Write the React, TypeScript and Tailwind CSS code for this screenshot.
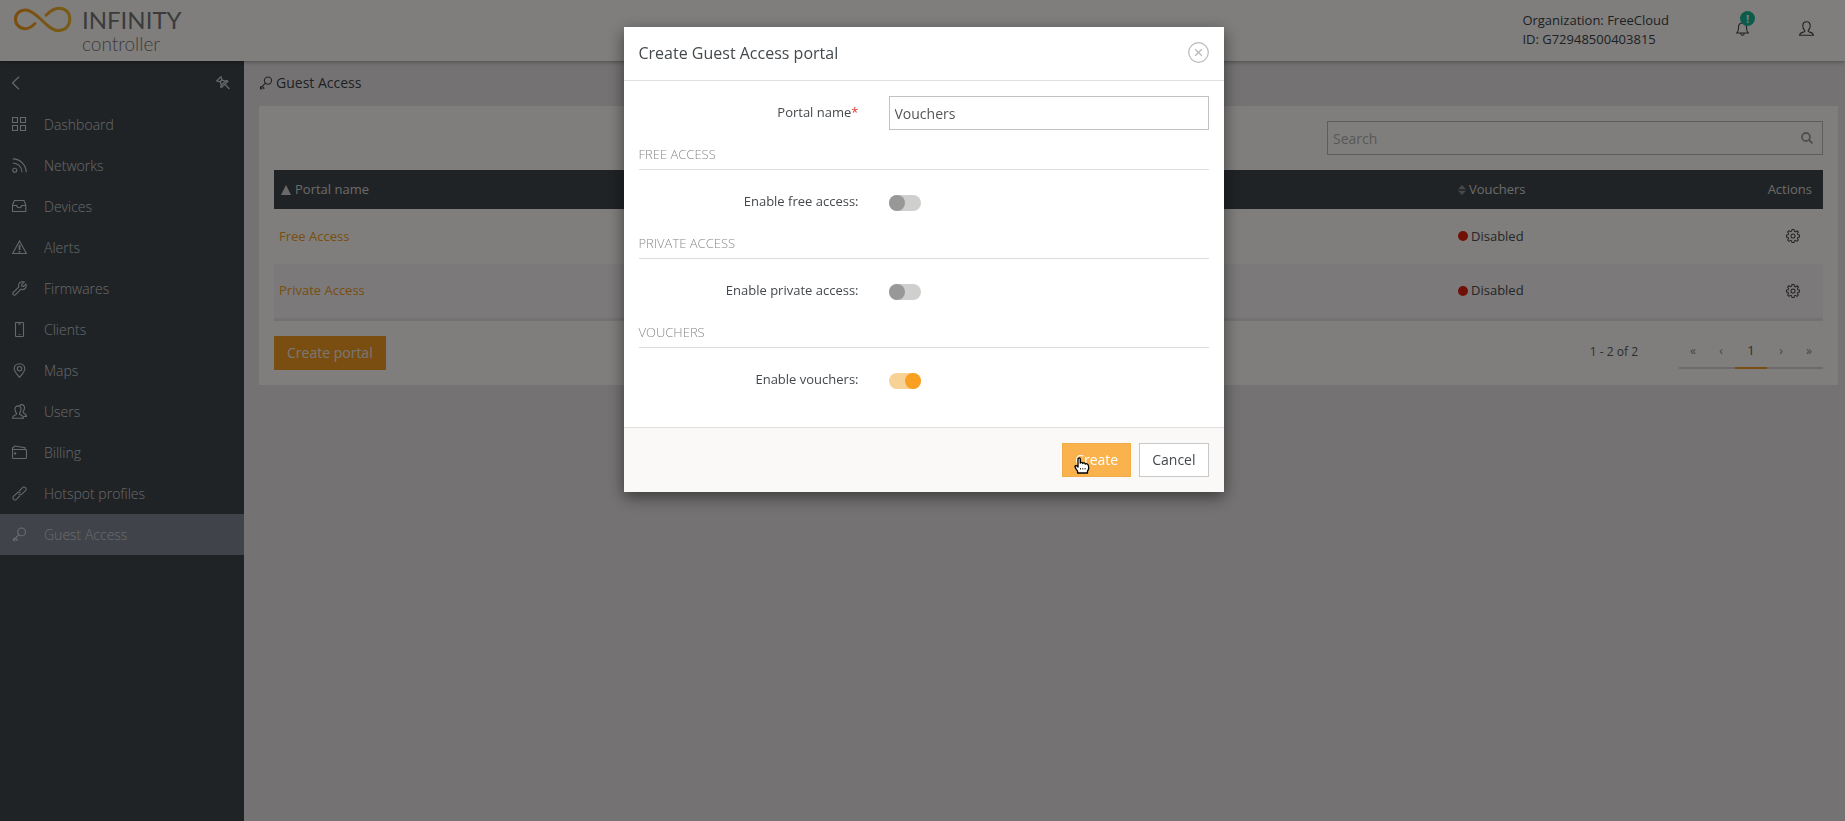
import { useState, type ReactNode } from "react";

type IconProps = { className?: string; children: ReactNode; box?: string };

function Icon({ className = "size-[15px]", children, box = "0 0 15 15" }: IconProps) {
  return (
    <svg
      className={className}
      viewBox={box}
      fill="none"
      stroke="currentColor"
      strokeWidth="1.1"
      aria-hidden="true"
    >
      {children}
    </svg>
  );
}

const KeyShape = (
  <>
    <circle cx="9.6" cy="4.9" r="3.9" />
    <path d="M6.9 7.7 L1.6 13 M1.6 11 V13.6 L3.6 13.8 M3.4 11 L5.4 13 L4.6 13.8" />
  </>
);

const UserShape = (
  <path d="M7.5 .8 C5 .8 3.7 2.4 3.8 5 C3.9 7 4.6 8.5 5.7 9.4 V10.6 C4.4 11.4 .8 11.200 .6 14.200 H14.400 C14.200 11.200 10.600 11.400 9.300 10.600 V9.400 C10.400 8.500 11.100 7 11.200 5 C11.300 2.400 10 .8 7.500 .8 Z" />
);

const navItems: { label: string; icon: ReactNode }[] = [
  {
    label: "Dashboard",
    icon: <path d="M.5 .5 H5.5 V5.5 H.5 Z M8.500 .5 H13.500 V5.500 H8.500 Z M.5 8.500 H5.500 V13.500 H.5 Z M8.500 8.500 H13.500 V13.500 H8.500 Z" />,
  },
  {
    label: "Networks",
    icon: (
      <>
        <circle cx="2.8" cy="12.2" r="2" />
        <path d="M.8 5 A9.2 9.2 0 0 1 10 14.2 M.8 .9 A13.4 13.4 0 0 1 14.2 14.2" />
      </>
    ),
  },
  {
    label: "Devices",
    icon: <path d="M2.400 1.500 H12 L13.800 6 V12.500 H.5 V6 Z M.5 6.500 H4.600 C4.800 7.800 5.800 8.700 7.200 8.700 S9.600 7.800 9.800 6.500 H13.800" />,
  },
  {
    label: "Alerts",
    icon: (
      <>
        <path d="M7.5 1 L14.4 13.500 H.6 Z" />
        <path d="M7.5 4.800 V10 M7.5 11 V12.400" strokeWidth="1.8" />
      </>
    ),
  },
  {
    label: "Firmwares",
    icon: (
      <path d="M12.2 1.1 C10 .2 7.5 1 6.8 3.1 C6.4 4.2 6.5 5.2 6.9 6 L1.1 11.7 C.1 12.8 2 15 3.3 13.9 L9 8.2 C10.6 8.9 12.6 8.4 13.6 6.9 C14.3 5.8 14.4 4.4 13.9 3.2 L11.6 5.4 L9.8 5.2 L9.6 3.4 Z" />
    ),
  },
  {
    label: "Clients",
    icon: <path d="M4.3 .5 H10.7 Q11.5 .5 11.5 1.3 V13.7 Q11.5 14.5 10.7 14.5 H4.3 Q3.5 14.5 3.5 13.7 V1.3 Q3.5 .5 4.3 .5 Z M6 2 H9 M6.8 12.5 H8.2" />,
  },
  {
    label: "Maps",
    icon: (
      <>
        <path d="M7.5 .7 C4.4 .7 2.2 2.9 2.2 5.8 C2.2 8.8 5.5 12 7.5 14.4 C9.5 12 12.8 8.8 12.8 5.8 C12.8 2.9 10.6 .7 7.5 .7 Z" />
        <circle cx="7.5" cy="5.7" r="2.2" />
      </>
    ),
  },
  {
    label: "Users",
    icon: (
      <>
        <path d="M6 1.9 C4 1.9 2.9 3.3 3 5.3 C3.1 7 3.7 8.3 4.4 9 V10.4 C3.4 11 .6 11.3 .5 14.3 H11.5 C11.4 11.3 8.6 11 7.6 10.4 V9 C8.3 8.3 8.9 7 9 5.3 C9.1 3.3 8 1.9 6 1.9 Z" />
        <path d="M7.6 1.6 C8.1 .9 8.8 .6 9.6 .6 C11.6 .6 12.6 2 12.5 4 C12.4 5.6 11.9 6.8 11.2 7.5 V8.9 C12.2 9.5 14.4 9.7 14.5 12.4 H11.6" />
      </>
    ),
  },
  {
    label: "Billing",
    icon: (
      <>
        <path d="M.5 4.500 H13 Q14.500 4.500 14.500 5.500 V12.500 Q14.500 13.500 13.500 13.500 H1.500 Q.5 13.500 .5 12.500 V3 L2.800 1 L13 2.600 V4.500" />
        <circle cx="3.200" cy="8.500" r=".6" />
      </>
    ),
  },
  {
    label: "Hotspot profiles",
    icon: (
      <>
        <path d="M7.2 5.2 L10.3 1.8 C12.4 -.4 15.6 2.8 13.3 4.9 L9.8 8.2 C8.6 9.2 7.2 8.9 6.5 8" />
        <path d="M7.8 9.8 L4.7 13.2 C2.6 15.4 -.6 12.2 1.7 10.1 L5.2 6.8 C6.4 5.8 7.8 6.1 8.5 7" />
      </>
    ),
  },
  { label: "Guest Access", icon: KeyShape },
];

function Logo() {
  return (
    <div className="flex items-start gap-[10px] pl-[14px] pt-[6px]">
      <svg className="h-[27px] w-[58px]" viewBox="0 0 58 27" fill="none" aria-hidden="true">
        <defs>
          <linearGradient id="logo" x1="0" x2="1">
            <stop offset="0" stopColor="#f79a1f" />
            <stop offset="1" stopColor="#efb82f" />
          </linearGradient>
        </defs>
        <path
          d="M21 17.500 C18.500 20 15.500 22.700 11.500 22.700 C5.500 22.700 1.500 18.500 1.500 13.200 C1.500 8 5.500 4 11.500 4 C16 4 20 7 26 12.500 L33.500 19.500 C37.500 23 40.500 24.600 44.800 24.600 C51.500 24.600 55.800 19.600 55.800 13 C55.800 6.500 51.500 2.200 45 2.200 C39.500 2.200 36 5.200 32 9.200"
          stroke="url(#logo)"
          strokeWidth="3"
          strokeLinecap="round"
        />
      </svg>
      <div className="flex flex-col font-['Lato',sans-serif] text-[#77777b]">
        <span className="text-[24px] leading-[28px]">INFINITY</span>
        <span className="text-[19px] font-light leading-[20px]">controller</span>
      </div>
    </div>
  );
}

function GearIcon() {
  return (
    <Icon className="size-[14px]">
      <path d="M6.4 .6 H8.6 L9 2.500 L10.300 3 L11.900 1.900 L13.300 3.300 L12.200 4.900 L12.700 6.100 L14.500 6.400 V8.600 L12.700 9 L12.200 10.200 L13.300 11.800 L11.800 13.300 L10.200 12.200 L9 12.700 L8.600 14.500 H6.400 L6 12.700 L4.800 12.200 L3.200 13.300 L1.700 11.800 L2.800 10.200 L2.300 9 L.5 8.600 V6.400 L2.300 6.100 L2.800 4.900 L1.700 3.300 L3.200 1.800 L4.800 2.900 L6 2.400 Z" />
      <circle cx="7.500" cy="7.500" r="2.200" />
    </Icon>
  );
}

function Header() {
  return (
    <header className="relative flex h-[61px] shrink-0 justify-between bg-[#fffdf8] shadow-[0_1px_4px_rgba(0,0,0,0.35)]">
      <Logo />
      <div className="flex text-[#3c4248]">
        <p className="mr-[67px] pt-[11px] text-[13px] leading-[19px]">
          Organization: FreeCloud
          <br />
          ID: G72948500403815
        </p>
        <button type="button" aria-label="Notifications" className="relative mr-12 mt-[21px] size-[15px]">
          <Icon className="h-[15px] w-[13px]" box="0 0 13 15">
            <path d="M.8 12 C2.400 10.500 2.500 9 2.500 6.500 C2.500 3.600 4 2 6.500 2 S10.500 3.600 10.500 6.500 C10.500 9 10.600 10.500 12.200 12 Z M4.800 12.200 C4.900 13.800 5.600 14.300 6.500 14.300 S8.100 13.800 8.200 12.200 M6.500 2 V.6" />
          </Icon>
          <span className="absolute -top-[10px] left-[4px] flex size-[15px] items-center justify-center rounded-full bg-[#1bb797] text-[11px] font-bold leading-none text-[#fffdf8]">
            !
          </span>
        </button>
        <button type="button" aria-label="Account" className="mr-[31px] mt-[21px] size-[15px]">
          <Icon>{UserShape}</Icon>
        </button>
      </div>
    </header>
  );
}

function Sidebar() {
  return (
    <aside className="w-[244px] shrink-0 bg-[#40464c] text-[#ced0d2]">
      <div className="flex h-[43px] items-center justify-between pl-[11px] pr-[14px]">
        <button type="button" aria-label="Collapse menu">
          <Icon className="h-[14px] w-[9px]" box="0 0 9 14">
            <path d="M8 .8 L1.500 7 L8 13.200" strokeWidth="1.200" />
          </Icon>
        </button>
        <button type="button" aria-label="Pin menu">
          <Icon className="size-[14px]" box="0 0 14 14">
            <path d="M4.900 .8 L6 4 L9.600 5.200 L11.200 4.600 L11.800 5.400 L5.500 11.400 L4.700 10.700 L5.400 9 L4.200 5.800 L.8 4.800 Z M4.200 5.800 L6 4 M9 8.200 L13.400 13 M5.400 9 L9.600 5.200" strokeWidth="1.300" />
          </Icon>
        </button>
      </div>
      <nav>
        <ul>
          {navItems.map(({ label, icon }) => (
            <li key={label}>
              <a
                href="#"
                className={
                  label === "Guest Access"
                    ? "flex h-[41px] items-center gap-[17px] bg-[#818692] pl-3 text-[14px] font-light text-[#d6d8dc]"
                    : "flex h-[41px] items-center gap-[17px] pl-3 text-[14px] font-light"
                }
              >
                <Icon>{icon}</Icon>
                {label}
              </a>
            </li>
          ))}
        </ul>
      </nav>
    </aside>
  );
}

function PortalTable() {
  return (
    <table className="w-full table-fixed text-[13px] text-[#4a4c4e]">
      <thead>
        <tr className="h-[39px] bg-[#40464c] text-[#d5d5d4]">
          <th scope="col" className="pl-[7px] text-left font-normal">
            <span className="flex items-center gap-1">
              <svg className="h-[10px] w-[10px]" viewBox="0 0 10 10" fill="currentColor" aria-hidden="true">
                <path d="M5 0 L10 10 H0 Z" />
              </svg>
              Portal name
            </span>
          </th>
          <th scope="col" className="w-[288px] pl-[3px] text-left font-normal">
            <span className="flex items-center gap-[3px]">
              <svg className="h-[10px] w-2" viewBox="0 0 8 10" fill="#8c8f91" aria-hidden="true">
                <path d="M4 0 L8 4.200 H0 Z M0 5.800 H8 L4 10 Z" />
              </svg>
              Vouchers
            </span>
          </th>
          <th scope="col" className="w-20 pr-[11px] text-right font-normal">
            Actions
          </th>
        </tr>
      </thead>
      <tbody>
        {["Free Access", "Private Access"].map((name, row) => (
          <tr
            key={name}
            className={
              row === 1 ? "h-[55px] border-b-3 border-[#e6e2e3] bg-[#f7f3f5]" : "h-[55px] border-b border-[#f4f0f0]"
            }
          >
            <td className="pl-[5px]">
              <a href="#" className="text-[#f29d20]">
                {name}
              </a>
            </td>
            <td className="pl-[3px]">
              <span className="flex items-center gap-[3px]">
                <span className="size-[10px] rounded-full bg-[#e2210f]" />
                Disabled
              </span>
            </td>
            <td className="pr-[23px]">
              <button type="button" aria-label={`Actions for ${name}`} className="ml-auto block">
                <GearIcon />
              </button>
            </td>
          </tr>
        ))}
      </tbody>
    </table>
  );
}

function Pagination() {
  const step = "h-[33px] flex-1 border-b-2 border-[#d8d5d4] text-[12px] text-[#87898a]";
  return (
    <div className="flex text-[12px] text-[#5a5c5e]">
      <span className="mr-[41px] leading-8">1 - 2 of 2</span>
      <nav aria-label="Pages" className="flex w-36">
        <button type="button" className={step}>«</button>
        <button type="button" className={step}>‹</button>
        <button type="button" className="h-[33px] w-8 border-b-2 border-[#f29d20] text-[13px]">1</button>
        <button type="button" className={step}>›</button>
        <button type="button" className={step}>»</button>
      </nav>
    </div>
  );
}

type ToggleSectionProps = { title: string; label: string; id: string; initial: boolean };

function ToggleSection({ title, label, id, initial }: ToggleSectionProps) {
  const [on, setOn] = useState(initial);
  return (
    <section className="h-[89px]">
      <h3 className="border-b border-[#dcdcdc] pb-[5px] text-[13px] font-light leading-[19px] text-[#8a8a8a]">
        {title}
      </h3>
      <div className="grid grid-cols-[220px_1fr] gap-[30px] pt-[21px] text-[13px] text-[#44494d]">
        <label htmlFor={id} className="text-right leading-5">
          {label}
        </label>
        <input
          id={id}
          type="checkbox"
          checked={on}
          onChange={(e) => setOn(e.target.checked)}
          className="mt-[4px] h-4 w-8 appearance-none rounded-full bg-[#cfcfce] before:block before:size-4 before:rounded-full before:bg-[#989898] checked:bg-[#f8d196] checked:before:ml-4 checked:before:bg-[#f99f22]"
        />
      </div>
    </section>
  );
}

function HandCursor() {
  return (
    <svg
      className="absolute left-[11px] top-[13px] h-[17px] w-4"
      viewBox="0 0 16 17"
      fill="#fff"
      stroke="#000"
      strokeWidth="1.300"
      strokeLinejoin="round"
      aria-hidden="true"
    >
      <path d="M4 10 V2 C4 .5 6.300 .5 6.300 2 V6.200 C6.500 5 8.600 5.100 8.700 6.500 C9.200 5.600 11.200 5.800 11.300 7.100 C12 6.300 13.900 6.700 14.200 8.100 C15 10.500 15 12.500 13.500 14 V16 H3.600 V14.200 C2.500 13 1.600 11.500 1 9.800 C.8 8.800 2.300 8.200 3 9 Z" />
      <path d="M6.500 11 V12.500 M8.800 11 V12.500 M11.100 11 V12.500" strokeWidth=".8" />
    </svg>
  );
}

function CreatePortalDialog() {
  return (
    <div
      role="dialog"
      aria-modal="true"
      aria-labelledby="dialog-title"
      className="w-[600px] bg-white shadow-[0_5px_15px_rgba(0,0,0,0.5)]"
    >
      <div className="flex h-[54px] items-center justify-between border-b border-[#e0e0e0] px-[15px] pb-0.5">
        <h2 id="dialog-title" className="text-[16px] text-[#44494d]">
          Create Guest Access portal
        </h2>
        <button type="button" aria-label="Close" className="text-[#b9b9b9]">
          <Icon className="size-[21px]" box="0 0 21 21">
            <circle cx="10.500" cy="10.500" r="9.800" strokeWidth="1.200" />
            <path d="M7.200 7.200 L13.800 13.800 M13.800 7.200 L7.200 13.800" strokeWidth="1.300" />
          </Icon>
        </button>
      </div>
      <form className="px-[15px] pt-[15px]" onSubmit={(e) => e.preventDefault()}>
        <div className="mb-[15px] grid grid-cols-[220px_1fr] gap-[30px]">
          <label htmlFor="portal-name" className="text-right text-[13px] leading-[33px] text-[#44494d]">
            Portal name<span className="text-[#dc3a2e]">*</span>
          </label>
          <input
            id="portal-name"
            type="text"
            defaultValue="Vouchers"
            className="h-[34px] w-full border border-[#c2c2c2] px-[5px] text-[14px] text-[#555]"
          />
        </div>
        <ToggleSection id="free" title="FREE ACCESS" label="Enable free access:" initial={false} />
        <ToggleSection id="private" title="PRIVATE ACCESS" label="Enable private access:" initial={false} />
        <ToggleSection id="vouchers" title="VOUCHERS" label="Enable vouchers:" initial={true} />
      </form>
      <div className="mt-[15px] flex justify-end gap-2 border-t border-[#e0e0e0] bg-[#faf9f7] px-[15px] py-[15px] text-[14px]">
        <button type="button" className="relative h-[34px] border border-[#f0ad4a] bg-[#f9b24c] px-3 pb-0.5 text-white">
          Create
          <HandCursor />
        </button>
        <button type="button" className="h-[34px] border border-[#c8c8c8] bg-white px-3 pb-0.5 text-[#44494d]">
          Cancel
        </button>
      </div>
    </div>
  );
}

export default function App() {
  return (
    <div className="flex min-h-screen flex-col bg-[#e9e5e6] font-['Open_Sans',sans-serif]">
      <Header />
      <div className="flex grow">
        <Sidebar />
        <main className="min-w-0 grow pl-[15px] pr-[7px]">
          <h1 className="flex h-[45px] items-center gap-[3px] pb-0.5 text-[14px] text-[#3c4248]">
            <Icon className="size-[14px]">{KeyShape}</Icon>
            Guest Access
          </h1>
          <div className="bg-[#fffdf8] p-[15px]">
            <div className="mb-[15px] ml-auto flex h-[34px] w-[496px] items-center border border-[#bdbab7] pl-[5px] pr-[9px]">
              <input
                type="search"
                placeholder="Search"
                aria-label="Search"
                className="min-w-0 grow bg-transparent text-[14px] placeholder:text-[#b3b1ae]"
              />
              <svg className="size-3 text-[#a09e9c]" viewBox="0 0 12 12" fill="none" stroke="currentColor" strokeWidth="1.800" aria-hidden="true">
                <circle cx="5" cy="5" r="4" />
                <path d="M8 8 L11.500 11.500" />
              </svg>
            </div>
            <PortalTable />
            <div className="mt-[15px] flex items-start justify-between">
              <button type="button" className="h-[34px] bg-[#f29d20] px-[13px] text-[14px] text-[#f3efe8]">
                Create portal
              </button>
              <Pagination />
            </div>
          </div>
        </main>
      </div>
      <div className="fixed inset-0 flex items-start justify-center bg-black/50 pl-0.5 pt-[27px]">
        <CreatePortalDialog />
      </div>
    </div>
  );
}
